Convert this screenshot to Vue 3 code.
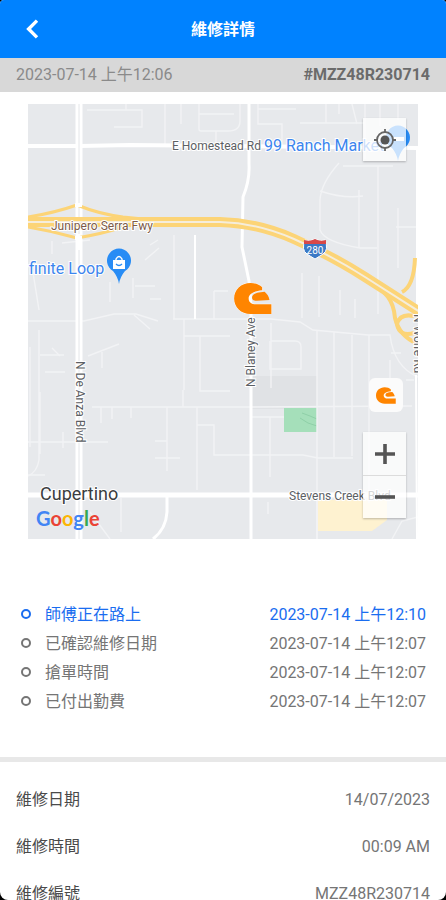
<template>
  <div class="screen">
    <header class="app-bar">
      <button type="button" class="back-button" aria-label="返回">
        <svg width="14" height="20" viewBox="0 0 14 20" aria-hidden="true">
          <path d="M12 1.6 3.6 10l8.4 8.4" fill="none" stroke="#fff" stroke-width="3.4" />
        </svg>
      </button>
      <h1 class="app-title">維修詳情</h1>
    </header>

    <div class="order-bar">
      <time class="order-time">2023-07-14 上午12:06</time>
      <strong class="order-id">#MZZ48R230714</strong>
    </div>

    <main class="content">
      <section class="map" aria-label="地圖">
        <svg class="map-canvas" viewBox="28 104 390 435" preserveAspectRatio="xMidYMid slice">
          <rect x="28" y="104" width="390" height="435" fill="#e7e9ec" />

          <!-- areas -->
          <path d="M251 376h66v33h-66z" fill="#e0e2e5" />
          <path d="M284 408h33v24h-33z" fill="#a5dfba" />
          <path d="M300 418l8 5 9 3M302 413l8 3 7 3" fill="none" stroke="#8fd0a8" stroke-width="1" />
          <path d="M317 500h70v20l-15 11h-55z" fill="#fef2d0" />

          <!-- side streets -->
          <g fill="none" stroke="#f2f3f5" stroke-width="1.4">
            <path d="M87 110h55v17h-28M126 104v6M165 104v43M181 104v20M199 104v25q0 2 2 2h27q12 0 12-10v-17M199 114h35M216 131v14" />
            <path d="M258 104v20h24v24M258 109h38M326 104v19M300 123h65M352 104l5 20M365 104v55M380 104v22M398 104v16" />
            <path d="M339 163q-18 20-19 37v30q4 12 40 18h17M320 191q24 8 43 5M359 248v-58M343 166h50M378 166v148M398 208v60M396 227h22" />
            <path d="M195 235v84M174 235v84M173 319h98l29 3 13 8 55 5h22q4 32 28 42" />
            <path d="M214 291h14M214 291v28M184 319v71M184 336h46M200 336v55h30M271 341h24q6 0 6 6v22H270v-28M302 273v45M319 276v41M340 290v25M355 299v19" />
            <path d="M317 330v210M334 332v125M352 335v121M369 335v168M390 360v45M271 323v65M391 353h10M406 380h8" />
            <path d="M92 407h160l160-1M183 390v17M167 407v64M167 441h-12M155 458h25M197 407v83M197 425h17v30h37M28 475h17M28 442h80" />
            <path d="M251 417h33M270 417v60M251 455h52l15 3h35M28 321h56l30-7h22l22 7M134 315l16 14M88 356l31-12M102 352v16" />
            <path d="M31 260l8 50M39 330v130q-2 12-11 16M40 392v62M40 355h24M63 432v16M90 240l-28 3M52 241v13M145 260l14-12M133 278v20M135 286h20M150 299h11M110 282v20M150 245l8-5" />
            <path d="M101 407v16M112 407v12M131 407v11M121 498v34M90 512l20 27M251 504v35M317 500v39M392 539l10-18 16-4M268 502v12" />
            <path d="M339 104v10M30 347v100M45 372h20M52 348l8 8" />
          </g>

          <!-- main streets -->
          <g fill="none" stroke="#fff">
            <path d="M28 146h52l50-1 290 3" stroke-width="4" />
            <path d="M28 495h390" stroke-width="5" />
            <path d="M79 104v435" stroke-width="7" />
            <path d="M249 104v60q1 16-6 33l-1 50 7 34 2 25v233" stroke-width="3" />
            <path d="M167 497v15q-1 17-14 27" stroke-width="3" />
            <path d="M195 235v84" stroke-width="2" />
            <path d="M417 150v166M416 375l1 164" stroke-width="2" />
          </g>
          <path d="M79 104v130M79 250v289" fill="none" stroke="#e4e6e9" stroke-width="1" />

          <!-- freeway -->
          <g fill="none" stroke="#fcd477">
            <path d="M28 217q26-4 49-12 22 9 46 12l30 3M28 227q24 4 49 11 24-4 43-10" stroke-width="3" />
            <path d="M28 222h192q38 1 74 17 40 18 71 38l58 37" stroke-width="10" />
            <path d="M358 270q18 12 30 27 6 8 7 21 4 18 23 26M415 258q-1 28-13 34" stroke-width="4" />
            <path d="M414 316q-14-3-17 8 2 13 17 9" stroke-width="4" />
          </g>
          <path d="M28 222h192q38 1 74 17 40 18 71 38l58 37" fill="none" stroke="#f5eddb" stroke-width="2" />
          <path d="M75 205h7M75 238h7" stroke="#fff" stroke-width="4" />

          <!-- street labels -->
          <g class="street">
            <text x="172" y="150">E Homestead Rd</text>
            <text x="51" y="230" class="freeway">Junipero Serra Fwy</text>
            <text x="289" y="500">Stevens Creek Blvd</text>
            <text transform="translate(76 361) rotate(90)">N De Anza Blvd</text>
            <text transform="translate(255 387) rotate(-90)">N Blaney Ave</text>
            <text transform="translate(414 314) rotate(90)">N Wolfe Rd</text>
          </g>
          <text x="40" y="500" class="city">Cupertino</text>
          <text x="264" y="151" class="place">99 Ranch Market</text>
          <text x="29" y="274" class="place">finite Loop</text>

          <!-- interstate shield -->
          <path d="M305 240q5 2 10-1 5 3 10 1 4 10-2 14-3 2-8 5-5-3-8-5-6-4-2-14z" fill="#3b78c5" stroke="#fff" stroke-width="1" />
          <path d="M304 240q6 2 11-1 5 3 11 1v4h-22z" fill="#d84848" />
          <text x="315" y="254" text-anchor="middle" class="shield">280</text>

          <!-- shopping pins -->
          <path d="M119 284q-1-7-6-13a12 12 0 1 1 12 0q-5 6-6 13z" fill="#288cf5" />
          <path d="M113 260h12v9h-12z" fill="#fff" />
          <path d="M116 260v-1q3-5 6 0v1" fill="none" stroke="#fff" stroke-width="1.4" />
          <path d="M116 264q3 3 6 0" fill="none" stroke="#288cf5" stroke-width="1.3" />
          <path d="M398 161q-1-7-6-13a12 12 0 1 1 12 0q-5 6-6 13z" fill="#288cf5" />
          <path d="M393 137h11v4h-11z" fill="#fff" />

          <!-- technician position -->
          <svg x="234" y="283" width="38" height="31" viewBox="0 0 39 32">
            <path :d="helmetShell" fill="#fff" stroke="#fff" stroke-width="1" />
            <path :d="helmetShell" fill="#ff8500" />
            <path :d="helmetVisor" fill="#ff8500" />
          </svg>
        </svg>

        <a href="#" class="google" aria-label="Google">
          <span v-for="(letter, index) in googleLetters" :key="index" :class="letter.tone">{{ letter.char }}</span>
        </a>

        <div class="map-controls">
          <button type="button" class="map-button locate" aria-label="我的位置">
            <svg width="24" height="24" viewBox="0 0 24 24" aria-hidden="true">
              <circle cx="12" cy="12" r="8" fill="none" stroke="#666" stroke-width="1.8" />
              <circle cx="12" cy="12" r="4.5" fill="#555" />
              <path d="M12 1v4M12 19v4M1 12h4M19 12h4" stroke="#666" stroke-width="1.8" />
            </svg>
          </button>
          <button type="button" class="technician" aria-label="師傅位置">
            <svg width="20" height="17" viewBox="0 0 39 32" aria-hidden="true">
              <path :d="helmetShell" fill="#ff8500" />
              <path :d="helmetVisor" fill="#ff8500" />
            </svg>
          </button>
          <div class="zoom">
            <button type="button" class="map-button" aria-label="放大">
              <svg width="20" height="20" viewBox="0 0 20 20" aria-hidden="true">
                <path d="M10 0v20M0 10h20" stroke="#555" stroke-width="3.6" />
              </svg>
            </button>
            <button type="button" class="map-button" aria-label="縮小">
              <svg width="20" height="20" viewBox="0 0 20 20" aria-hidden="true">
                <path d="M0 10h20" stroke="#555" stroke-width="3.6" />
              </svg>
            </button>
          </div>
        </div>
      </section>

      <ol class="timeline">
        <li v-for="step in steps" :key="step.label" class="step" :class="{ active: step.active }">
          <span class="step-dot"></span>
          <span class="step-label">{{ step.label }}</span>
          <time>{{ step.time }}</time>
        </li>
      </ol>

      <dl class="details">
        <div v-for="row in details" :key="row.label" class="detail-row">
          <dt>{{ row.label }}</dt>
          <dd>{{ row.value }}</dd>
        </div>
      </dl>
    </main>
  </div>
</template>

<script setup>
// Helmet marker, shared by the map and the map control
const helmetShell = 'M29 4.5C26 1.500 22 0 17 0 7 0 0 7 0 16s7 16 17 16h21.500v-10H23c-5 0-8-2-8-6 0-5 5-7.500 14-8.500z';
const helmetVisor = 'M31.500 9l-6 .8c-4.500.7-7 2.700-7 5.200 0 2.500 2 3.500 5 3.300L36.500 17.500c-.5-3.500-2.500-6.500-5-8.500z';

const googleLetters = [
  { char: 'G', tone: 'blue' },
  { char: 'o', tone: 'red' },
  { char: 'o', tone: 'yellow' },
  { char: 'g', tone: 'blue' },
  { char: 'l', tone: 'green' },
  { char: 'e', tone: 'red' }
];

const steps = [
  { label: '師傅正在路上', time: '2023-07-14 上午12:10', active: true },
  { label: '已確認維修日期', time: '2023-07-14 上午12:07' },
  { label: '搶單時間', time: '2023-07-14 上午12:07' },
  { label: '已付出勤費', time: '2023-07-14 上午12:07' }
];

const details = [
  { label: '維修日期', value: '14/07/2023' },
  { label: '維修時間', value: '00:09 AM' },
  { label: '維修編號', value: 'MZZ48R230714' }
];
</script>

<style>
body {
  margin: 0;
  background: #000;
}
</style>

<style scoped>
.screen {
  display: flex;
  flex-direction: column;
  height: 100vh;
  overflow: hidden;
  border-radius: 4px 4px 8px 8px;
  background: #fff;
  color: #757575;
  font-family: Roboto, "Noto Sans CJK TC", sans-serif;
  font-size: 16px;
  line-height: 24px;
}

button {
  display: grid;
  place-items: center;
  padding: 0;
  border: 0;
  cursor: pointer;
}

.app-bar {
  display: grid;
  grid-template-columns: 32px 1fr 32px;
  align-items: center;
  flex: none;
  height: 58px;
  padding: 0 16px;
  background: #0082ff;
}

.back-button {
  height: 32px;
  background: none;
}

.app-title {
  margin: 0;
  padding-top: 2px;
  color: #fff;
  font-size: 16px;
  font-weight: 700;
  text-align: center;
}

.order-bar {
  display: flex;
  align-items: center;
  justify-content: space-between;
  flex: none;
  height: 34px;
  padding: 0 16px;
  background: #d8d8d8;
}

.order-time {
  color: #8a8a8a;
}

.order-id {
  color: #6b6b6b;
  font-weight: 700;
}

.content {
  flex: 1;
  min-height: 0;
  overflow-y: auto;
  scrollbar-width: none;
}

.map {
  position: relative;
  margin: 12px 28px 0;
}

.map-canvas {
  display: block;
  width: 100%;
  height: 435px;
}

.street {
  fill: #5c6064;
  stroke: #fff;
  stroke-width: 2px;
  paint-order: stroke;
  font-size: 12px;
}

.freeway {
  fill: #7d5a48;
}

.city {
  fill: #3b3d40;
  stroke: #fff;
  stroke-width: 2px;
  paint-order: stroke;
  font-size: 18px;
}

.place {
  fill: #3c85ee;
  stroke: #fff;
  stroke-width: 2px;
  paint-order: stroke;
  font-size: 16px;
}

.shield {
  fill: #fff;
  font-size: 10px;
}

.google {
  position: absolute;
  bottom: 9px;
  left: 8px;
  font-family: Lato, sans-serif;
  font-size: 20px;
  font-weight: 700;
  text-decoration: none;
}

.blue {
  color: #4285f4;
}

.red {
  color: #ea4335;
}

.yellow {
  color: #fbb605;
}

.green {
  color: #34a853;
}

.map-controls {
  position: absolute;
  top: 14px;
  right: 12px;
  bottom: 21px;
  display: flex;
  flex-direction: column;
  align-items: flex-end;
}

.map-button {
  width: 43px;
  height: 43px;
  background: rgba(255, 255, 255, 0.75);
}

.locate,
.zoom {
  box-shadow: 0 1px 2px rgba(0, 0, 0, 0.25);
}

.technician {
  width: 34px;
  height: 34px;
  margin: auto 3px 20px 0;
  border-radius: 6px;
  background: #fbfbfb;
}

.zoom .map-button + .map-button {
  border-top: 1px solid #dcdcdc;
}

.timeline {
  margin: 0;
  padding: 61px 20px 41px;
  border-bottom: 5px solid #e8e8e8;
  list-style: none;
}

.step {
  display: flex;
  align-items: center;
  height: 29px;
}

.step.active {
  color: #1a6df0;
}

.step-dot {
  box-sizing: border-box;
  width: 10px;
  height: 10px;
  margin: 0 14px 2px 1px;
  border: 2px solid currentColor;
  border-radius: 50%;
}

.step-label {
  flex: 1;
}

.details {
  margin: 0;
  padding: 14px 16px;
}

.detail-row {
  display: flex;
  align-items: center;
  justify-content: space-between;
  height: 47px;
}

.detail-row dt {
  color: #4a4a4a;
}

.detail-row dd {
  margin: 0;
}
</style>
